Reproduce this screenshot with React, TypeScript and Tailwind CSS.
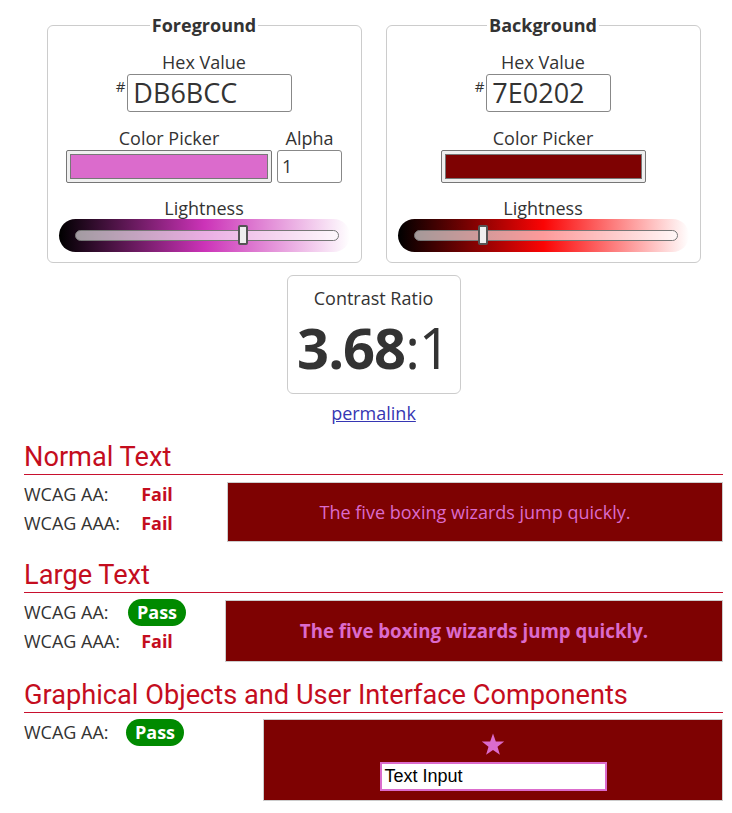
import React from "react";

const Slider = ({ grad, pct }: { grad: string; pct: number }) => (
  <div className={`mt-[-1px] flex h-[33px] w-[291px] items-center rounded-full pl-[16px] pr-[11px] ${grad}`}>
    <div className="relative h-[11px] flex-1 rounded-full border border-[#777] bg-white/60">
      <div
        className="absolute top-[-6px] h-[20px] w-[10px] rounded-[2px] border-2 border-[#555] bg-[#efefef]"
        style={{ left: Math.round(pct * 254) - 1 }}
      />
    </div>
  </div>
);

const Swatch = ({ w, color }: { w: string; color: string }) => (
  <div className={`h-[33px] ${w} rounded-[2px] border border-[#767676] bg-[#efefef] p-[3px]`}>
    <div className={`h-full w-full border border-[#777] ${color}`} />
  </div>
);

const Pass = () => (
  <span className="inline-flex h-[27px] w-[58px] items-center justify-center rounded-full bg-[#008a00] font-bold text-white">
    Pass
  </span>
);

const Fail = () => <span className="font-bold text-[#c40d1e]">Fail</span>;

const Heading = ({ children }: { children: React.ReactNode }) => (
  <h2 className="border-b border-solid border-b-[#c8102e] pb-[1px] font-['Roboto',sans-serif] text-[27.2px] leading-[32px] text-[#c40d1e]">
    {children}
  </h2>
);

export default function App() {
  return (
    <div className="min-h-[813px] bg-white font-['Open_Sans',sans-serif] text-[18px] text-[#333]">
      <div className="ml-[24px] w-[699px] pt-[13px]">
        <div className="flex justify-center gap-[24px]">
          {/* Foreground */}
          <fieldset className="w-[315px] rounded-[6px] border border-[#ccc] pb-[10px]">
            <legend className="mx-auto px-[2px] text-[18px] font-bold leading-[24px]">Foreground</legend>
            <div className="flex flex-col items-center">
              <div className="mt-[13px] leading-[24px]">Hex Value</div>
              <div className="flex items-start">
                <span className="mr-[2px] text-[15px] leading-[24px]">#</span>
                <div className="flex h-[38px] w-[165px] items-center rounded-[3px] border border-[#888] pl-[5px] text-[27px]">
                  DB6BCC
                </div>
              </div>
              <div className="mt-[14px] flex items-end gap-[5px]">
                <div className="flex flex-col items-center">
                  <div className="leading-[24px]">Color Picker</div>
                  <Swatch w="w-[206px]" color="bg-[#db6bcc]" />
                </div>
                <div className="flex flex-col items-center">
                  <div className="leading-[24px]">Alpha</div>
                  <div className="flex h-[33px] w-[65px] items-center rounded-[3px] border border-[#888] pl-[4px]">1</div>
                </div>
              </div>
              <div className="mt-[13px] leading-[24px]">Lightness</div>
              <Slider grad="bg-[linear-gradient(to_right,#000,#cc33b8,#fff)]" pct={0.64} />
            </div>
          </fieldset>

          {/* Background */}
          <fieldset className="w-[315px] rounded-[6px] border border-[#ccc] pb-[10px]">
            <legend className="mx-auto px-[2px] text-[18px] font-bold leading-[24px]">Background</legend>
            <div className="flex flex-col items-center">
              <div className="mt-[13px] leading-[24px]">Hex Value</div>
              <div className="flex items-start">
                <span className="mr-[2px] text-[15px] leading-[24px]">#</span>
                <div className="flex h-[38px] w-[125px] items-center rounded-[3px] border border-[#888] pl-[5px] text-[27px]">
                  7E0202
                </div>
              </div>
              <div className="mt-[14px] flex flex-col items-center">
                <div className="leading-[24px]">Color Picker</div>
                <Swatch w="w-[205px]" color="bg-[#7e0202]" />
              </div>
              <div className="mt-[13px] leading-[24px]">Lightness</div>
              <Slider grad="bg-[linear-gradient(to_right,#000,#fb0404,#fff)]" pct={0.25} />
            </div>
          </fieldset>
        </div>

        {/* Contrast ratio */}
        <div className="mt-[12px] flex flex-col items-center">
          <div className="flex h-[119px] w-[174px] flex-col items-center rounded-[6px] border border-[#ccc] pt-[10px]">
            <div className="leading-[24px]">Contrast Ratio</div>
            <div className="mt-[7px] text-[56px] leading-[60px] tracking-[-1px]">
              <span className="font-bold">3.68</span>
              <span>:1</span>
            </div>
          </div>
          <a href="#" className="mt-[7px] leading-[24px] text-[#3636b3] underline">
            permalink
          </a>
        </div>

        {/* Normal Text */}
        <div className="mt-[16px]">
          <Heading>Normal Text</Heading>
          <div className="mt-[5px] flex items-start">
            <div className="w-[203px]">
              <div className="grid h-[29px] grid-cols-[104px_58px] items-center">
                <span>WCAG AA:</span>
                <span className="text-center"><Fail /></span>
              </div>
              <div className="grid h-[29px] grid-cols-[104px_58px] items-center">
                <span>WCAG AAA:</span>
                <span className="text-center"><Fail /></span>
              </div>
            </div>
            <div className="mt-[2px] flex h-[60px] flex-1 items-center justify-center border border-[#ccc] bg-[#7e0202] text-[#db6bcc]">
              The five boxing wizards jump quickly.
            </div>
          </div>
        </div>

        {/* Large Text */}
        <div className="mt-[17px]">
          <Heading>Large Text</Heading>
          <div className="mt-[5px] flex items-start">
            <div className="w-[201px]">
              <div className="grid h-[29px] grid-cols-[104px_58px] items-center">
                <span>WCAG AA:</span>
                <span className="flex justify-center"><Pass /></span>
              </div>
              <div className="grid h-[29px] grid-cols-[104px_58px] items-center">
                <span>WCAG AAA:</span>
                <span className="text-center"><Fail /></span>
              </div>
            </div>
            <div className="mt-[2px] flex h-[62px] flex-1 items-center justify-center border border-[#ccc] bg-[#7e0202] text-[18.7px] font-bold text-[#db6bcc]">
              The five boxing wizards jump quickly.
            </div>
          </div>
        </div>

        {/* Graphical Objects */}
        <div className="mt-[17px]">
          <Heading>Graphical Objects and User Interface Components</Heading>
          <div className="mt-[5px] flex items-start">
            <div className="w-[239px]">
              <div className="grid h-[29px] grid-cols-[102px_58px] items-center">
                <span>WCAG AA:</span>
                <span className="flex justify-center"><Pass /></span>
              </div>
            </div>
            <div className="mt-[1px] flex h-[82px] flex-1 flex-col items-center border border-[#ccc] bg-[#7e0202] pt-[13px]">
              <svg width="24" height="23" viewBox="0 0 24 23" aria-hidden="true">
                <polygon
                  points="12,0.5 14.8,8.4 23.2,8.6 16.5,13.7 18.9,21.8 12,17 5.1,21.8 7.5,13.7 0.8,8.6 9.2,8.4"
                  fill="#db6bcc"
                />
              </svg>
              <div className="mt-[6px] flex h-[29px] w-[227px] items-center border-2 border-[#db6bcc] bg-white pl-[3px] font-['Liberation_Sans',Arial,sans-serif] text-[18px] text-black">
                Text Input
              </div>
            </div>
          </div>
        </div>
      </div>
    </div>
  );
}
